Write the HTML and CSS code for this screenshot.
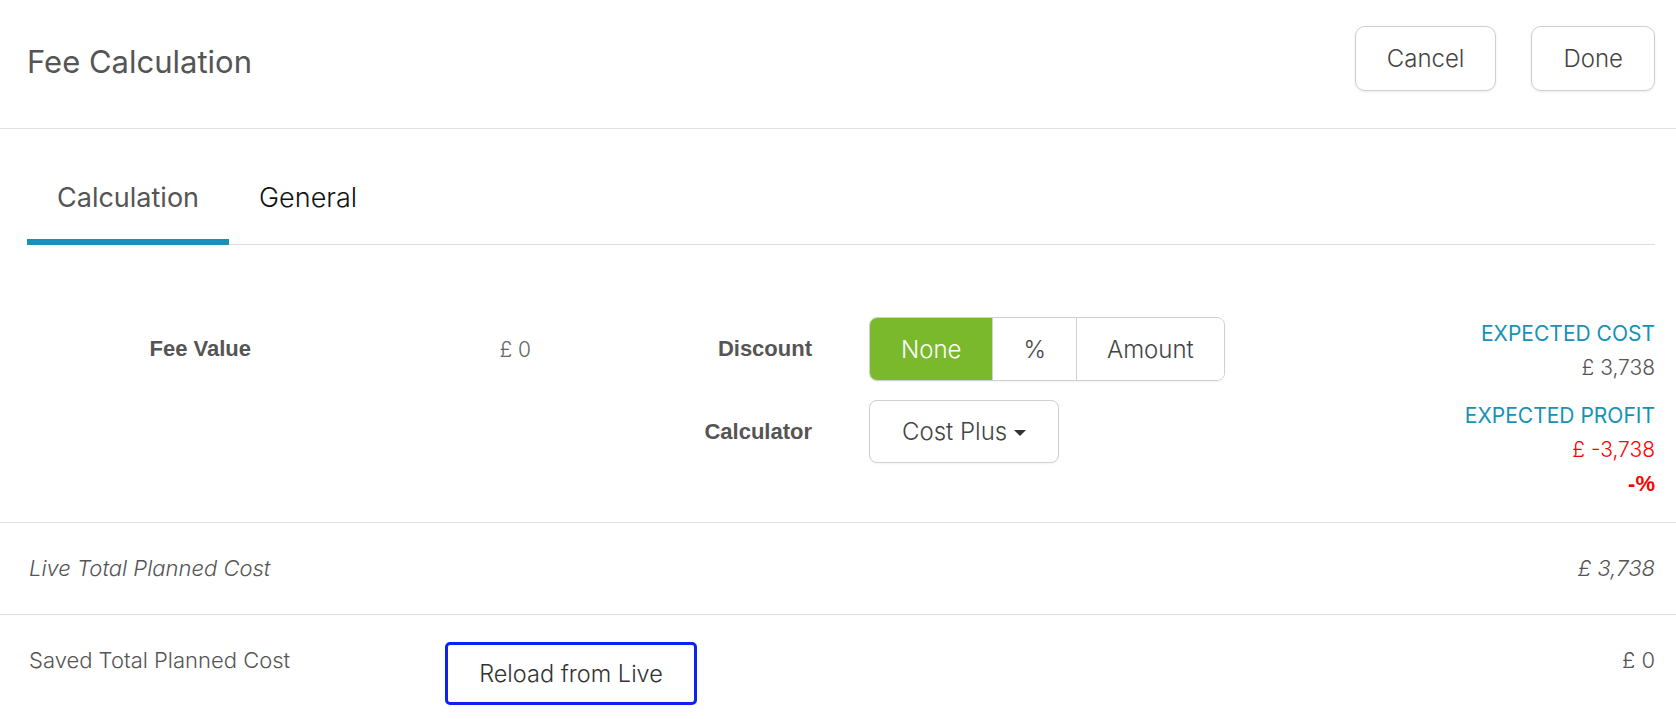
FILE: index.html
```html
<!DOCTYPE html>
<html lang="en">
<head>
    <meta charset="UTF-8">
    <meta name="viewport" content="width=device-width, initial-scale=1.0">
    <title>Fee Calculation</title>
    <link rel="stylesheet" href="styles.css">
</head>
<body>

<div class="modal">

    <header class="modal-header">
        <h1 class="modal-title">Fee Calculation</h1>
        <div class="header-actions">
            <button class="btn">Cancel</button>
            <button class="btn">Done</button>
        </div>
    </header>

    <nav class="tabs">
        <a class="tab active">Calculation</a>
        <a class="tab">General</a>
    </nav>

    <section class="calc">
        <div class="calc-form">
            <div class="field-label">Fee Value</div>
            <div class="fee-value">£ 0</div>
            <div class="field-label">Discount</div>
            <div class="segmented">
                <button class="seg selected">None</button>
                <button class="seg">%</button>
                <button class="seg">Amount</button>
            </div>

            <div></div>
            <div></div>
            <div class="field-label">Calculator</div>
            <div>
                <button class="dropdown">Cost Plus <span class="caret"></span></button>
            </div>
        </div>

        <div class="summary">
            <div class="summary-title">EXPECTED COST</div>
            <div class="summary-value">£ 3,738</div>
            <div class="summary-title profit">EXPECTED PROFIT</div>
            <div class="summary-value negative">£ -3,738</div>
            <div class="summary-pct">-%</div>
        </div>
    </section>

    <div class="total-row live">
        <span class="total-label">Live Total Planned Cost</span>
        <span class="total-value">£ 3,738</span>
    </div>

    <div class="total-row saved">
        <span class="total-label">Saved Total Planned Cost</span>
        <button class="reload-btn">Reload from Live</button>
        <span class="total-value">£ 0</span>
    </div>

</div>

</body>
</html>
```

FILE: styles.css
```css
body {
    margin: 0;
    background: #fff;
    font-family: Inter, "Noto Sans", sans-serif;
    color: #555;
}

.modal {
    width: 100%;
}

.modal-header {
    display: flex;
    justify-content: space-between;
    align-items: flex-start;
    height: 102px;
    padding: 26px 21px 0 27px;
    border-bottom: 1px solid #e2e2e2;
}

.modal-title {
    margin: 17px 0 0 0;
    font-size: 31px;
    font-weight: 400;
    line-height: 38px;
    color: #555;
}

.header-actions {
    display: flex;
    gap: 35px;
}

.btn {
    height: 65px;
    padding: 0 31px;
    font-family: Inter, sans-serif;
    font-size: 24px;
    font-weight: 300;
    color: #444;
    background: #fff;
    border: 1px solid #cfcfcf;
    border-radius: 10px;
    box-shadow: 0 1px 3px rgba(0, 0, 0, 0.08);
    cursor: pointer;
}

.tabs {
    display: flex;
    margin: 0 21px 0 27px;
    padding-top: 52px;
    border-bottom: 1px solid #dedede;
}

.tab {
    padding: 0 30px 24px;
    font-size: 27px;
    line-height: 34px;
    font-weight: 300;
    color: #111;
    border-bottom: 6px solid transparent;
    margin-bottom: -1px;
    cursor: pointer;
}

.tab.active {
    color: #555;
    font-weight: 400;
    border-bottom-color: #1592b5;
}

.calc {
    display: flex;
    align-items: flex-start;
    justify-content: space-between;
    padding: 70px 21px 21px 29px;
}

.calc-form {
    display: grid;
    grid-template-columns: 222px 280px 281px auto;
    grid-template-rows: 64px 63px;
    row-gap: 19px;
    align-items: center;
    margin-top: 2px;
}

.field-label {
    text-align: right;
    font-family: "Liberation Sans", Arial, sans-serif;
    font-size: 22px;
    font-weight: bold;
    color: #555;
}

.fee-value {
    text-align: right;
    font-size: 21px;
    font-weight: 300;
    color: #666;
}

.segmented {
    display: flex;
    margin-left: 57px;
    height: 64px;
    border: 1px solid #d0d0d0;
    border-radius: 8px;
    overflow: hidden;
    box-sizing: border-box;
    box-shadow: 0 1px 2px rgba(0, 0, 0, 0.05);
}

.seg {
    padding: 0 30px;
    font-family: Inter, sans-serif;
    font-size: 24px;
    font-weight: 300;
    color: #444;
    background: #fff;
    border: none;
    border-left: 1px solid #d0d0d0;
    cursor: pointer;
}

.seg:first-child {
    border-left: none;
    padding: 0 31px;
}

.seg.selected {
    background: #79b92b;
    color: #fff;
}

.dropdown {
    display: flex;
    align-items: center;
    gap: 7px;
    margin-left: 57px;
    height: 63px;
    padding: 0 32px;
    font-family: Inter, sans-serif;
    font-size: 24px;
    font-weight: 300;
    color: #444;
    background: #fff;
    border: 1px solid #d0d0d0;
    border-radius: 8px;
    box-shadow: 0 1px 2px rgba(0, 0, 0, 0.05);
    cursor: pointer;
}

.caret {
    display: inline-block;
    width: 0;
    height: 0;
    border-left: 6px solid transparent;
    border-right: 6px solid transparent;
    border-top: 6px solid #333;
    margin-top: 3px;
}

.summary {
    text-align: right;
    font-size: 21px;
    line-height: 34px;
    margin-top: 2px;
}

.summary-title {
    color: #1592b5;
}

.summary-title.profit {
    margin-top: 14px;
}

.summary-value {
    font-weight: 300;
    color: #555;
}

.summary-value.negative {
    color: #f00;
}

.summary-pct {
    font-family: "Liberation Sans", Arial, sans-serif;
    font-weight: bold;
    font-size: 22px;
    color: #f00;
}

.total-row {
    display: flex;
    align-items: flex-start;
    padding: 0 21px 0 29px;
    border-top: 1px solid #e2e2e2;
    font-size: 22px;
    line-height: 30px;
    font-weight: 300;
    color: #555;
}

.total-row.live {
    padding-top: 30px;
    padding-bottom: 31px;
    font-style: italic;
}

.total-row.saved {
    padding-top: 30px;
    padding-bottom: 14px;
}

.total-label {
    flex: 0 0 416px;
}

.total-value {
    margin-left: auto;
}

.reload-btn {
    margin-top: -3px;
    width: 252px;
    height: 63px;
    font-family: Inter, sans-serif;
    font-size: 23.5px;
    font-weight: 300;
    color: #333;
    background: #fff;
    border: 3px solid #0b22f0;
    border-radius: 5px;
    cursor: pointer;
}
```
